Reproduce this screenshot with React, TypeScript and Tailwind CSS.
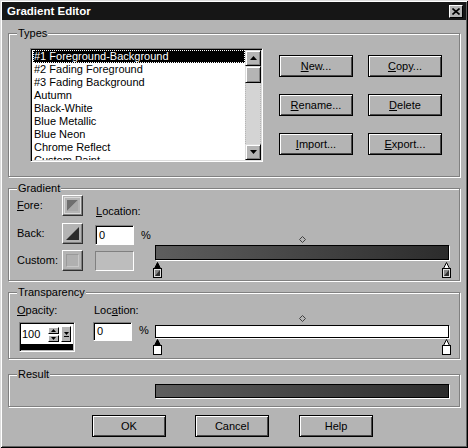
import React from "react";

const BG = "bg-[#b4b4b4]";

function U({ c }: { c: string }) {
  return <span className="underline underline-offset-[1px] decoration-1">{c}</span>;
}

function Btn({ children, className = "" }: { children: React.ReactNode; className?: string }) {
  return (
    <div
      className={`w-[74px] h-[22px] border border-black bg-[#b4b4b4] shadow-[inset_1px_1px_0_#ffffff,inset_-1px_-1px_0_#4a4a4a] flex items-center justify-center text-[11px] leading-[13px] text-black ${className}`}
    >
      {children}
    </div>
  );
}

function Group({ label, className = "", children }: { label: string; className?: string; children?: React.ReactNode }) {
  return (
    <div className={`relative border border-[#808080] shadow-[inset_1px_1px_0_#ffffff,1px_1px_0_#ffffff] ${className}`}>
      <span className="absolute left-[8px] top-[-7px] bg-[#b4b4b4] px-[1px] leading-[13px] text-[11px]">{label}</span>
      {children}
    </div>
  );
}

function Diamond() {
  return (
    <svg width="7" height="7" viewBox="0 0 7 7" className="block">
      <path d="M3.5 0.5 L6.5 3.5 L3.5 6.5 L0.5 3.5 Z" fill="#b4b4b4" stroke="#404040" strokeWidth="1" />
    </svg>
  );
}

function Stop({ selected, fill }: { selected: boolean; fill: "grad" | "white" }) {
  return (
    <svg width="9" height="16" viewBox="0 0 9 16" className="block">
      <path d="M4.5 0.5 L7.5 6.5 L1.5 6.5 Z" fill={selected ? "#000" : "#fff"} stroke="#000" strokeWidth="1" />
      <rect x="0.5" y="6.5" width="8" height="9" fill={fill === "white" ? "#fff" : "#e0e0e0"} stroke="#000" strokeWidth="1" />
      {fill === "grad" && (
        <>
          <rect x="2" y="8" width="5" height="6" fill="#8a8a8a" />
          <path d="M7 8 L7 14 L2 14 Z" fill="#2e2e2e" />
        </>
      )}
    </svg>
  );
}

function Arrow({ dir }: { dir: "up" | "down" }) {
  return (
    <svg width="7" height="4" viewBox="0 0 7 4" className="block">
      {dir === "up" ? <path d="M3.5 0 L7 4 L0 4 Z" fill="#000" /> : <path d="M0 0 L7 0 L3.5 4 Z" fill="#000" />}
    </svg>
  );
}

function SwatchFrame({ children }: { children: React.ReactNode }) {
  return (
    <div className="w-[21px] h-[21px] border border-t-white border-l-white border-b-[#303030] border-r-[#303030] shadow-[inset_-1px_-1px_0_#808080] flex items-center justify-center">
      {children}
    </div>
  );
}

function Input({ value, h }: { value: string; h: string }) {
  return (
    <div className={`w-[39px] ${h} bg-white border border-t-[#808080] border-l-[#808080] border-b-white border-r-white shadow-[inset_1px_1px_0_#000] flex items-center pl-[3px] text-[11px]`}>
      {value}
    </div>
  );
}

const items = [
  "#1 Foreground-Background",
  "#2 Fading Foreground",
  "#3 Fading Background",
  "Autumn",
  "Black-White",
  "Blue Metallic",
  "Blue Neon",
  "Chrome Reflect",
  "Custom Paint",
];

export default function App() {
  return (
    <div
      className={`w-[468px] h-[448px] ${BG} font-['Liberation_Sans',Arial,sans-serif] text-[11px] text-black p-[2px] flex flex-col shadow-[inset_1px_1px_0_#dcdcdc,inset_-1px_-1px_0_#000,inset_2px_2px_0_#ffffff,inset_-2px_-2px_0_#606060] overflow-hidden`}
    >
      {/* title bar */}
      <div className="h-[18px] bg-[#161616] flex items-center justify-between pl-[5px] pr-[3px]">
        <span className="text-white font-bold text-[11.5px] leading-[14px]">Gradient Editor</span>
        <div className="w-[14px] h-[13px] bg-[#b4b4b4] border border-t-white border-l-white border-b-black border-r-black flex items-center justify-center">
          <svg width="8" height="7" viewBox="0 0 8 7" className="block">
            <path d="M0.5 0.5 L7.5 6.5 M7.5 0.5 L0.5 6.5" stroke="#000" strokeWidth="1.6" />
          </svg>
        </div>
      </div>

      {/* Types */}
      <Group label="Types" className="mx-[6px] mt-[13px] h-[144px]">
        <div className="flex items-start">
          {/* listbox */}
          <div className="ml-[21px] mt-[14px] w-[233px] h-[114px] border border-t-[#808080] border-l-[#808080] border-b-white border-r-white shadow-[inset_1px_1px_0_#000,inset_-1px_-1px_0_#dcdcdc] p-[1px] flex">
            <div className="flex-1 bg-white overflow-hidden pl-[1px]">
              {items.map((it, i) => (
                <div
                  key={it}
                  className={`h-[13px] leading-[13px] pl-[1px] whitespace-nowrap text-[11px] ${
                    i === 0 ? "bg-black text-white outline outline-1 outline-dotted outline-white -outline-offset-1" : ""
                  }`}
                >
                  {it}
                </div>
              ))}
            </div>
            {/* scrollbar */}
            <div className="w-[16px] flex flex-col bg-[#d4d4d4]">
              <div className="h-[16px] bg-[#b4b4b4] border border-t-[#dcdcdc] border-l-[#dcdcdc] border-b-black border-r-black shadow-[inset_1px_1px_0_#fff,inset_-1px_-1px_0_#808080] flex items-center justify-center">
                <Arrow dir="up" />
              </div>
              <div className="h-[17px] bg-[#b4b4b4] border border-t-[#dcdcdc] border-l-[#dcdcdc] border-b-black border-r-black shadow-[inset_1px_1px_0_#fff,inset_-1px_-1px_0_#808080]" />
              <div className="flex-1 border-x border-dotted border-[#b4b4b4]" />
              <div className="h-[16px] bg-[#b4b4b4] border border-t-[#dcdcdc] border-l-[#dcdcdc] border-b-black border-r-black shadow-[inset_1px_1px_0_#fff,inset_-1px_-1px_0_#808080] flex items-center justify-center">
                <Arrow dir="down" />
              </div>
            </div>
          </div>
          {/* buttons */}
          <div className="ml-[16px] mt-[21px] grid grid-cols-[74px_74px] gap-x-[15px] gap-y-[17px]">
            <Btn><U c="N" />ew...</Btn>
            <Btn><U c="C" />opy...</Btn>
            <Btn><U c="R" />ename...</Btn>
            <Btn><U c="D" />elete</Btn>
            <Btn><U c="I" />mport...</Btn>
            <Btn><U c="E" />xport...</Btn>
          </div>
        </div>
      </Group>

      {/* Gradient */}
      <Group label="Gradient" className="mx-[6px] mt-[11px] h-[93px]">
        <div className="flex items-start pl-[8px]">
          {/* col A */}
          <div className="flex flex-col mt-[6px]">
            <div className="flex items-center">
              <span className="w-[45px] leading-[13px]"><U c="F" />ore:</span>
              <SwatchFrame>
                <svg width="17" height="17" viewBox="0 0 17 17" className="block">
                  <rect x="0.5" y="0.5" width="16" height="16" fill="none" stroke="#ffffff" strokeWidth="1" strokeDasharray="1 1" />
                  <path d="M3 3 L14 3 L3 14 Z" fill="#6e6e6e" />
                  <path d="M14 3 L14 14 L3 14 Z" fill="#a8a8a8" />
                </svg>
              </SwatchFrame>
            </div>
            <div className="flex items-center mt-[7px]">
              <span className="w-[45px] leading-[13px]">Back:</span>
              <SwatchFrame>
                <svg width="17" height="17" viewBox="0 0 17 17" className="block">
                  <path d="M15 2 L15 15 L2 15 Z" fill="#2b2b2b" />
                </svg>
              </SwatchFrame>
            </div>
            <div className="flex items-center mt-[6px]">
              <span className="w-[45px] leading-[13px]">Custom:</span>
              <SwatchFrame>
                <div className="w-[13px] h-[13px] bg-[#b0b0b0] border border-t-[#9a9a9a] border-l-[#9a9a9a] border-b-[#c8c8c8] border-r-[#c8c8c8]" />
              </SwatchFrame>
            </div>
          </div>
          {/* col B */}
          <div className="ml-[12px] w-[39px] flex flex-col mt-[16px]">
            <span className="leading-[13px] pl-[1px] whitespace-nowrap"><U c="L" />ocation:</span>
            <div className="mt-[7px]"><Input value="0" h="h-[20px]" /></div>
            <div className="mt-[6px] w-[39px] h-[20px] bg-[#bdbdbd] border border-t-[#808080] border-l-[#808080] border-b-white border-r-white" />
          </div>
          {/* col C */}
          <div className="w-[21px] pl-[7px] mt-[40px] leading-[13px]">%</div>
          {/* col D */}
          <div className="w-[294px] flex flex-col mt-[47px]">
            <div className="flex justify-center"><Diamond /></div>
            <div className="mt-[2px] h-[15px] border border-black shadow-[1px_1px_0_#ffffff] bg-[linear-gradient(to_right,#5e5e5e,#2c2c2c)]" />
            <div className="mt-[2px] -ml-[2px] w-[298px] flex justify-between">
              <Stop selected fill="grad" />
              <Stop selected={false} fill="grad" />
            </div>
          </div>
        </div>
      </Group>

      {/* Transparency */}
      <Group label="Transparency" className="mx-[6px] mt-[11px] h-[67px]">
        <div className="flex items-start pl-[8px]">
          {/* col A */}
          <div className="w-[76px] flex flex-col mt-[11px]">
            <span className="leading-[13px]"><U c="O" />pacity:</span>
            <div className="ml-[2px] mt-[5px] w-[56px] h-[30px] border border-t-[#808080] border-l-[#808080] border-b-white border-r-white shadow-[inset_1px_1px_0_#000] p-[1px] flex flex-col">
              <div className="flex-1 bg-white flex items-center">
                <span className="pl-[1px] text-[11px] leading-[13px] w-[27px]">100</span>
                <div className="flex flex-col gap-[1px]">
                  <div className="w-[11px] h-[7px] bg-[#b4b4b4] border border-t-white border-l-white border-b-black border-r-black flex items-center justify-center">
                    <svg width="5" height="3" viewBox="0 0 5 3" className="block"><path d="M2.5 0 L5 3 L0 3 Z" fill="#000" /></svg>
                  </div>
                  <div className="w-[11px] h-[7px] bg-[#b4b4b4] border border-t-white border-l-white border-b-black border-r-black flex items-center justify-center">
                    <svg width="5" height="3" viewBox="0 0 5 3" className="block"><path d="M0 0 L5 0 L2.5 3 Z" fill="#000" /></svg>
                  </div>
                </div>
                <div className="ml-[2px] w-[10px] h-[16px] bg-[#b4b4b4] border border-t-white border-l-white border-b-black border-r-black flex flex-col items-center justify-center gap-[1px]">
                  <svg width="5" height="3" viewBox="0 0 5 3" className="block"><path d="M0 0 L5 0 L2.5 3 Z" fill="#000" /></svg>
                  <div className="w-[5px] h-[1px] bg-black" />
                </div>
              </div>
              <div className="h-[6px] bg-black" />
            </div>
          </div>
          {/* col B */}
          <div className="w-[39px] flex flex-col mt-[11px]">
            <span className="leading-[13px] pl-[1px] whitespace-nowrap">Loc<U c="a" />tion:</span>
            <div className="mt-[5px]"><Input value="0" h="h-[19px]" /></div>
          </div>
          {/* col C */}
          <div className="w-[23px] pl-[7px] mt-[31px] leading-[13px]">%</div>
          {/* col D */}
          <div className="w-[294px] flex flex-col mt-[22px]">
            <div className="flex justify-center"><Diamond /></div>
            <div className="mt-[3px] h-[13px] border border-black shadow-[1px_1px_0_#ffffff] bg-white" />
            <div className="mt-[1px] -ml-[2px] w-[298px] flex justify-between">
              <Stop selected fill="white" />
              <Stop selected={false} fill="white" />
            </div>
          </div>
        </div>
      </Group>

      {/* Result */}
      <Group label="Result" className="mx-[6px] mt-[15px] h-[33px]">
        <div className="ml-[146px] mt-[9px] w-[294px] h-[14px] border border-black shadow-[1px_1px_0_#ffffff] bg-[linear-gradient(to_right,#5e5e5e,#2c2c2c)]" />
      </Group>

      {/* bottom buttons */}
      <div className="flex mt-[8px]">
        <Btn className="ml-[90px]">OK</Btn>
        <Btn className="ml-[29px]">Cancel</Btn>
        <Btn className="ml-[30px]">Help</Btn>
      </div>
    </div>
  );
}
